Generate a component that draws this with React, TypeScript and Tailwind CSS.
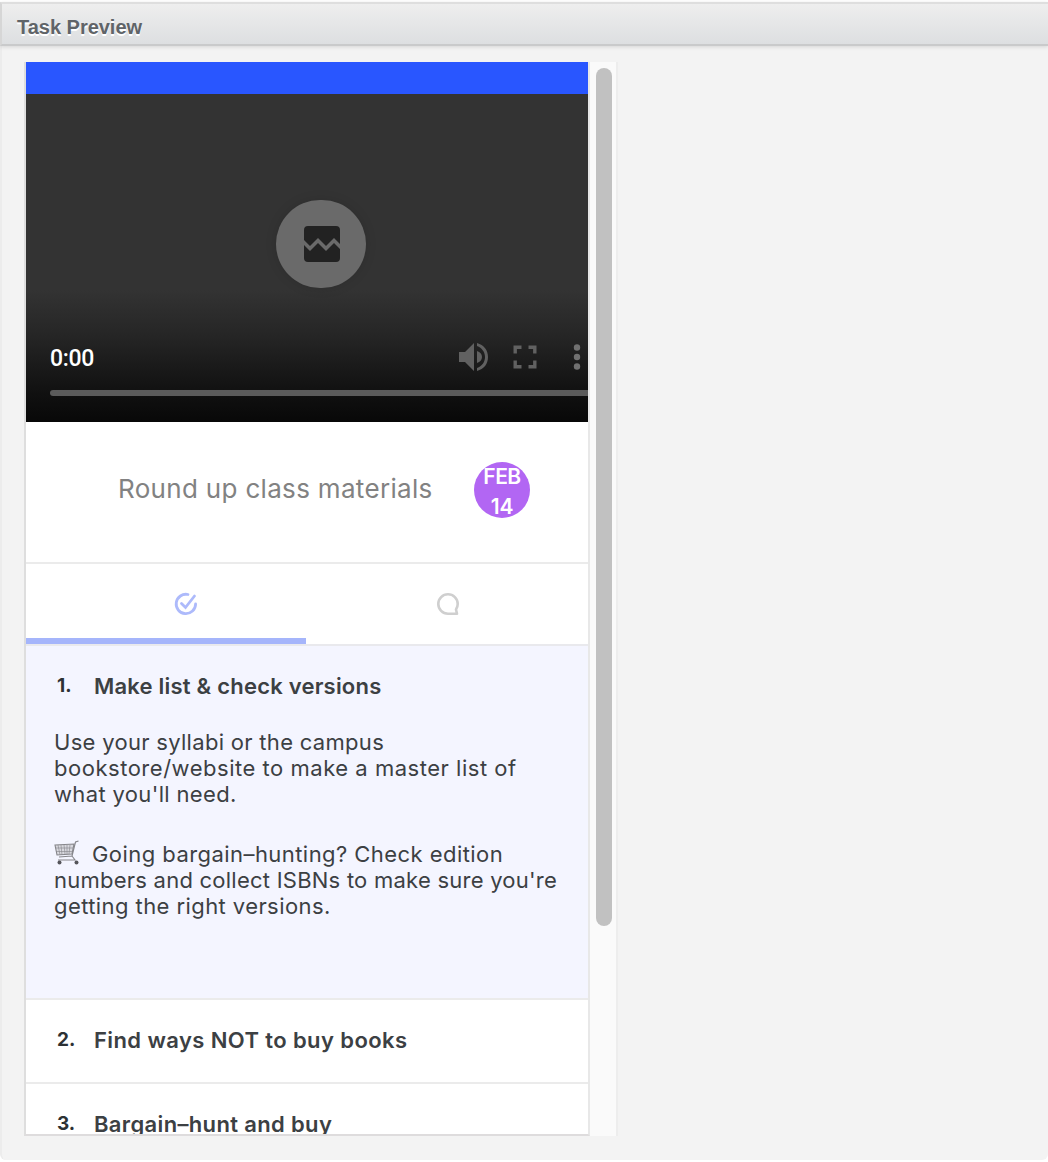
import React from "react";

function Line({ children, className = "w-max" }: { children: React.ReactNode; className?: string }) {
  return (
    <span className={`block whitespace-pre ${className}`}>{children}</span>
  );
}

function BrokenMedia() {
  return (
    <div className="ml-[250px] flex h-[88px] w-[90px] items-center justify-center rounded-full bg-[#6a6a6a] shadow-[0_0_12px_rgba(0,0,0,0.12)]">
      <svg width="36" height="36" viewBox="0 0 36 36" className="ml-[2px]">
        <path fill="#222" d="M4 0h28a4 4 0 0 1 4 4v14l-6-6-8 8-8-8-8 8-6-6V4a4 4 0 0 1 4-4z" />
        <path fill="#222" d="M0 19l6 6 8-8 8 8 8-8 6 6v9a4 4 0 0 1-4 4H4a4 4 0 0 1-4-4z" />
      </svg>
    </div>
  );
}

function Video() {
  return (
    <div className="flex h-[328px] flex-col bg-[linear-gradient(to_bottom,#333_0,#333_196px,#262626_240px,#101010_300px,#080808_328px)] pt-[106px]">
      <BrokenMedia />
      <div className="mt-[54px] flex h-[30px] items-center pl-[24px]">
        <span className="w-[409px] shrink-0 pt-[4px] font-['Roboto'] text-[23px] font-medium leading-[30px] tracking-[-0.3px] text-white">0:00</span>
        <svg width="30" height="30" viewBox="0 0 30 30" fill="#616161" className="shrink-0">
          <path d="M0 10h6l9-9v28l-9-9H0zM18 9c3 1 5 3 5 6s-2 5-5 6z" />
          <path d="M18 1c7 2 11 7 11 14s-4 12-11 14v-3c5-2 8-6 8-11s-3-9-8-11z" />
        </svg>
        <svg width="24" height="24" viewBox="0 0 24 24" fill="none" stroke="#616161" strokeWidth="3.400" className="ml-[24px] shrink-0">
          <path d="M2.200 8.500V2.200H8.500M15.500 2.200h6.300V8.500M21.800 15.500v6.300H15.500M8.500 21.800H2.200V15.500" />
        </svg>
        <svg width="8" height="28" viewBox="0 0 8 28" fill="#707070" className="ml-[36px] shrink-0">
          <circle cx="4" cy="4.500" r="3.200" />
          <circle cx="4" cy="14" r="3.200" />
          <circle cx="4" cy="23.500" r="3.200" />
        </svg>
      </div>
      <div className="ml-[24px] mt-[18px] h-[6px] rounded-l-full bg-[#5b5b5b]" />
    </div>
  );
}

function Cart() {
  return (
    <svg width="26" height="26" viewBox="0 0 26 26" fill="none" stroke="#85858a" strokeWidth="1.100">
      <path fill="#d8d8de" d="M1 5l19-1-2 10-15 1z" />
      <path d="M4 5l2 10M7 5l1 10M10 5l1 9M13 5v9M16 5l-1 9M1.500 8H19M2 11.500h17" strokeWidth="0.600" />
      <path d="M24.500 1l-3 1-3.500 14L21 20H4M18 16L5 17" />
      <circle cx="5.500" cy="22.500" r="2" fill="#55555a" stroke="none" />
      <circle cx="22.500" cy="22.500" r="2" fill="#55555a" stroke="none" />
    </svg>
  );
}

function Step({ n, children }: { n: string; children: React.ReactNode }) {
  return (
    <div className="flex h-[82px] items-start pl-[31px] pt-[25px] font-semibold leading-[30px]">
      <span className="w-[37px] text-[19px] font-bold leading-[30px] text-[#2c3134]">{n}</span>
      {children}
    </div>
  );
}

export default function App() {
  return (
    <main className="h-[1162px] w-[1048px] overflow-hidden bg-white pt-[2px]">
      <section className="h-[1158px] rounded-b-[6px] border-l-2 border-[#ececec] bg-[#f3f3f3]">
        <header className="-ml-[2px] h-[44px] border-y-2 border-l-2 border-b-[#c9cacb] border-l-[#d6d6d6] border-t-[#dedede] bg-gradient-to-b from-[#eee] to-[#dddfe1] pl-[15px] shadow-[0_1px_4px_rgba(0,0,0,0.12)]">
          <h1 className="pt-[8px] font-['Liberation_Sans'] text-[20px] font-bold leading-[30px] tracking-[-0.020px] text-[#606468] [text-shadow:0_2px_0_#fff]">Task Preview</h1>
        </header>
        <div className="ml-[22px] mt-[16px] flex h-[1074px] w-[594px]">
          <div className="h-full w-[566px] shrink-0 overflow-hidden border-x-2 border-b-2 border-b-[#dedcdd] border-l-[#dedede] border-r-[#e8e8e8] bg-white font-['Inter'] text-[22px] text-[#3c4043]">
            <div className="h-[32px] bg-[#2956ff]" />
            <Video />
            <div className="flex h-[142px] border-b-2 border-[#ebebeb] pl-[92px] pt-[40px]">
              <Line className="w-[356px] shrink-0 text-[26px] leading-[54px] tracking-[0.320px] text-[#828282]">Round up class materials</Line>
              <div className="flex h-[56px] w-[56px] flex-col items-center rounded-full bg-[#b266f3] text-[21px] font-semibold leading-[30px] text-white">
                <Line className="tracking-[-0.500px]">FEB</Line>
                <Line className="tracking-[-0.300px]">14</Line>
              </div>
            </div>
            <div className="grid h-[82px] grid-cols-[280px_282px] border-b-2 border-[#e9e9ed]">
              <div className="border-b-[6px] border-[#a5b5fb] pl-[148px] pt-[28px]">
                <svg width="24" height="24" viewBox="0 0 24 24" fill="none" stroke="#adbafb" strokeWidth="2.800" strokeLinecap="round">
                  <path d="M14 2.500A9.700 9.700 0 1 0 21.600 12" />
                  <path d="M7.500 11.500l4 4L20.500 4" />
                </svg>
              </div>
              <div className="pl-[130px] pt-[28px]">
                <svg width="24" height="24" viewBox="0 0 24 24" fill="none" stroke="#cfcfcf" strokeWidth="2.600" strokeLinejoin="round">
                  <path d="M12 21.700A9.700 9.700 0 1 1 21.700 12C21.700 14 21 16 20 17.500L21 21.700Z" />
                </svg>
              </div>
            </div>
            <div className="h-[354px] border-b-2 border-[#ebebeb] bg-[#f4f5ff]">
              <Step n="1."><Line className="tracking-[0.220px]">Make list &amp; check versions</Line></Step>
              <div className="pl-[28px] pt-px leading-[26px]">
                <Line className="tracking-[0.300px]">Use your syllabi or the campus</Line>
                <Line className="tracking-[0.520px]">bookstore/website to make a master list of</Line>
                <Line className="tracking-[0.350px]">what you'll need.</Line>
                <div className="mt-[34px] flex gap-[12px]">
                  <div className="-mt-px h-[26px]"><Cart /></div>
                  <Line className="tracking-[0.440px]">Going bargain–hunting? Check edition</Line>
                </div>
                <Line className="tracking-[0.240px]">numbers and collect ISBNs to make sure you're</Line>
                <Line className="tracking-[0.420px]">getting the right versions.</Line>
              </div>
            </div>
            <div className="border-b-2 border-[#ebebeb]"><Step n="2."><Line className="tracking-[0.400px]">Find ways NOT to buy books</Line></Step></div>
            <Step n="3."><Line className="tracking-[0.350px]">Bargain–hunt and buy</Line></Step>
          </div>
          <div className="w-[28px] border-r-2 border-[#ededed] bg-[#fafafa] pl-[6px] pt-[6px]">
            <div className="h-[858px] w-[16px] rounded-full bg-[#c1c1c1]" />
          </div>
        </div>
      </section>
    </main>
  );
}
